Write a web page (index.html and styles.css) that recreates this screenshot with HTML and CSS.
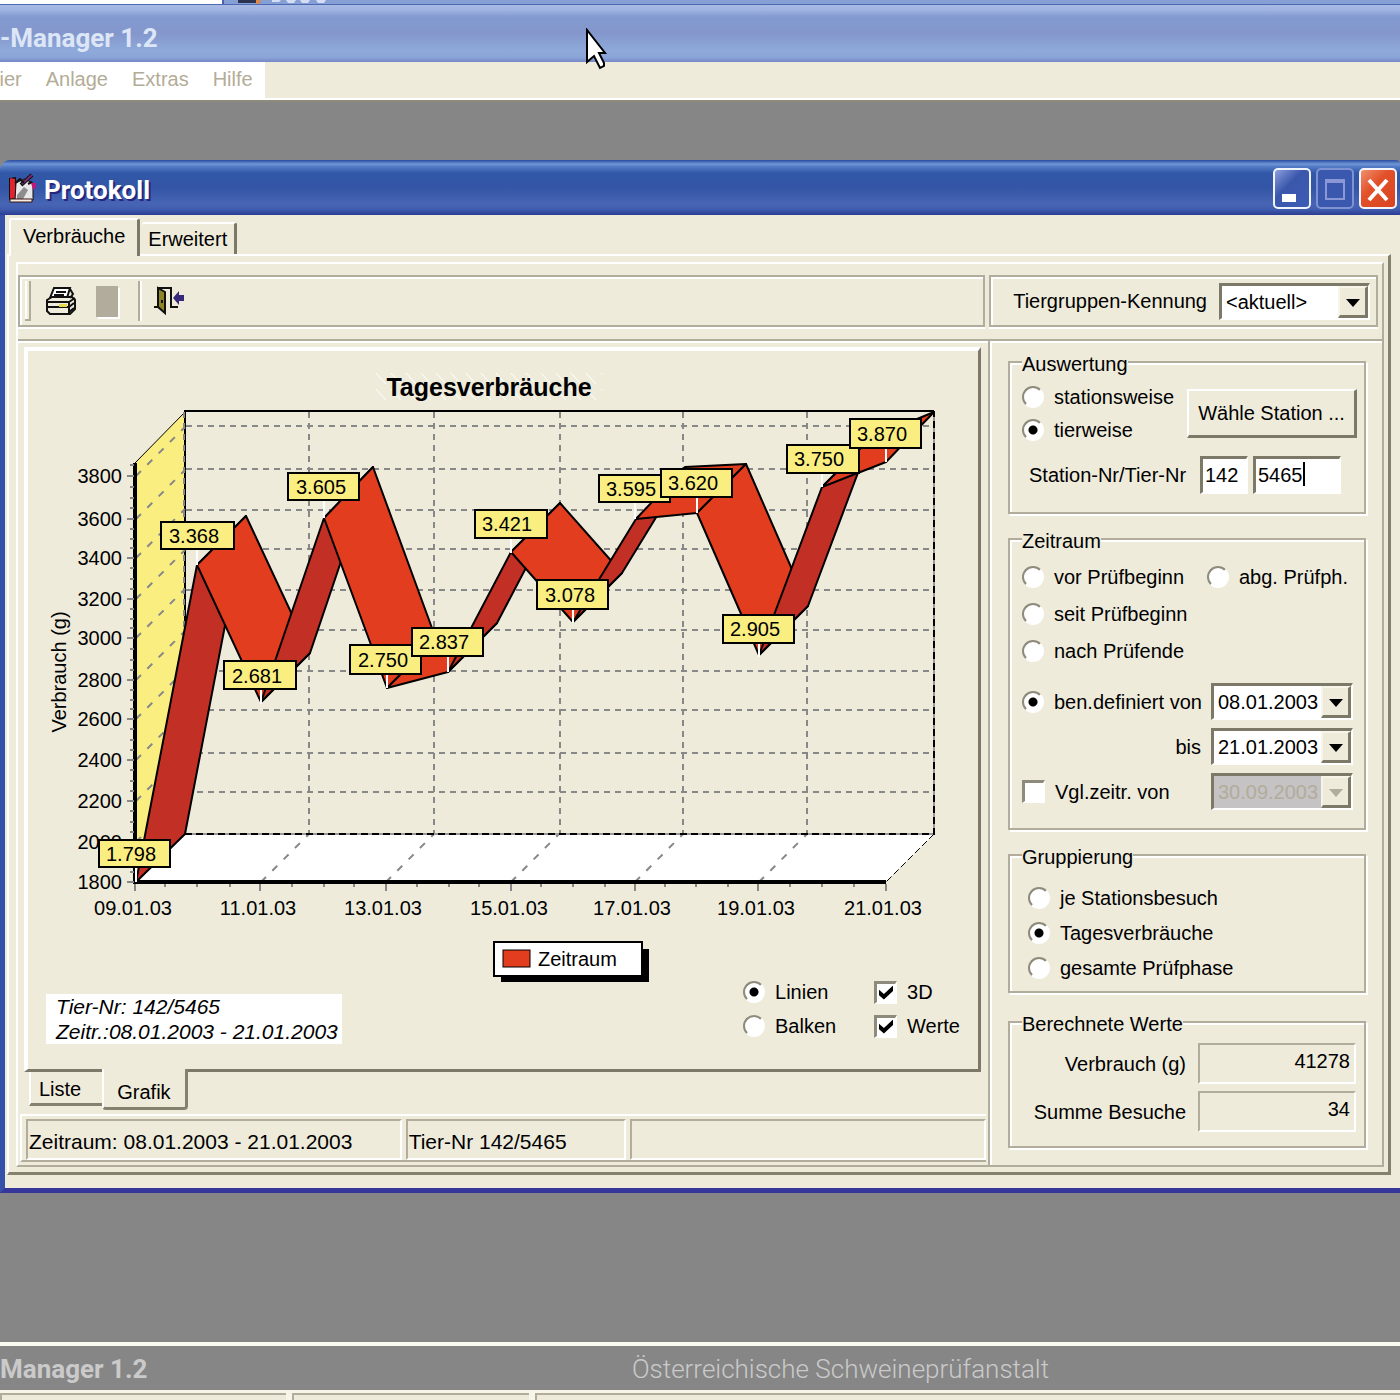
FILE: index.html
```
<!DOCTYPE html>
<html lang="de">
<head>
<meta charset="utf-8">
<title>Protokoll</title>
<meta name="viewport" content="width=device-width">
<link rel="stylesheet" href="styles.css">
</head>
<body>

<header class="app">
	<div class="behind">
		<div class="behind-page"></div>
		<svg class="behind-title" width="120" height="4" viewBox="0 0 120 4">
			<path d="M14 0h22v3h-22z" fill="#2b3350"/><path d="M32 0h5l-2 4h-3z" fill="#e08a4a"/>
			<path d="M48 0h9l-2 2h-7zM62 0h10l-2 3h-6zM76 0h10l-2 3h-6zM92 0h10l-2 3h-6z" fill="#d5def4"/>
		</svg>
	</div>
	<div class="app-title">-Manager 1.2</div>
	<nav class="menubar">
		<ul>
			<li><a href="#">Tier</a></li>
			<li><a href="#">Anlage</a></li>
			<li><a href="#">Extras</a></li>
			<li><a href="#">Hilfe</a></li>
		</ul>
	</nav>
</header>

<main class="desktop">
<section class="window">
	<div class="titlebar">
		<svg class="title-icon" width="32" height="32" viewBox="0 0 32 32">
			<path d="M2 5l7-1v23H2z" fill="#111"/>
			<path d="M3 5l5 1v19l-5 1z" fill="#e0232e"/>
			<path d="M9 10l8-4 9 4v17H8z" fill="#e8e8e8" stroke="#111" stroke-width="1"/>
			<path d="M10 22l7-8 4 3-5 9h-6z" fill="#8d8d90"/>
			<path d="M14 12l11-10" stroke="#111" stroke-width="4" fill="none"/>
			<path d="M15 11l10-9" stroke="#7b2a7c" stroke-width="2"/>
			<path d="M8 10l5-4 4 4M21 11l4-2" stroke="#111" stroke-width="2" fill="none"/>
			<path d="M24 10h5v4l-3 3z" fill="#c2177d"/>
			<path d="M3 26h22v3H3z" fill="#f6efe0" stroke="#3a1414"/>
		</svg>
		<h1>Protokoll</h1>
		<div class="window-buttons">
			<button type="button" aria-label="Minimieren"><svg viewBox="0 0 34 36"><rect x="7" y="23" width="14" height="8" fill="#fff"/></svg></button>
			<button type="button" class="dim" aria-label="Maximieren" disabled><svg viewBox="0 0 34 36"><path d="M8 9h18v19H8zM8 11h18" fill="none" stroke="#8c98d6" stroke-width="2"/></svg></button>
			<button type="button" class="close" aria-label="Schließen"><svg viewBox="0 0 34 36"><path d="M8 9l18 20M26 9L8 29" stroke="#fff" stroke-width="4"/></svg></button>
		</div>
	</div>

	<div class="client">
	<div class="tabs" role="tablist">
		<button type="button" role="tab" class="tab active" aria-selected="true">Verbräuche</button>
		<button type="button" role="tab" class="tab">Erweitert</button>
	</div>

	<div class="sheet">
	<div class="inner">
		<div class="toolbars">
			<div class="toolbar">
				<span class="grip"></span>
				<button type="button" class="tool" aria-label="Drucken">
					<svg width="32" height="30" viewBox="0 0 32 30">
						<path d="M9 2h16l-3 10H5z" fill="#fff" stroke="#111" stroke-width="2"/>
						<path d="M11 6h10M9 9h10" stroke="#111" stroke-width="2"/>
						<path d="M2 14l5-3h20l3 3v9l-5 5H5l-3-3z" fill="#efecdd" stroke="#111" stroke-width="2"/>
						<path d="M2 16h22v11M3 21h21M24 16l6-4M24 21l5-4M24 26l5-4M25 3l3 5-3 4" stroke="#111" stroke-width="2" fill="none"/>
						<path d="M14 18h8v3h-8z" fill="#e5d84a"/>
					</svg>
				</button>
				<button type="button" class="tool tool-blank" aria-label="Vorschau" disabled></button>
				<span class="divider"></span>
				<button type="button" class="tool" aria-label="Beenden">
					<svg width="32" height="30" viewBox="0 0 32 30">
						<path d="M0 21h5M4 2h13v19h7" fill="none" stroke="#111" stroke-width="2"/>
						<path d="M4 2l7 4v21l-7-6z" fill="#8e8424" stroke="#111" stroke-width="2"/>
						<path d="M8 14v3" stroke="#111" stroke-width="2"/>
						<path d="M19 12l6-7v4h5v6h-5v4z" fill="#36297a"/>
					</svg>
				</button>
			</div>
			<div class="toolbar group-bar">
				<label for="kennung">Tiergruppen-Kennung</label>
				<span class="select wide"><select id="kennung"><option>&lt;aktuell&gt;</option></select></span>
			</div>
		</div>

		<div class="columns">
		<div class="left">
			<div class="chart-panel">
				<svg class="chart" viewBox="28 351 950 624" role="img" aria-label="Tagesverbräuche">
					<defs>
						<pattern id="hatch" x="374" y="371" width="15" height="16" patternUnits="userSpaceOnUse">
							<path d="M2 2l10 11" stroke="#fff" stroke-width="1"/>
						</pattern>
					</defs>
					<rect x="374" y="371" width="228" height="32" fill="url(#hatch)"/>
					<text class="chart-title" x="489" y="396">Tagesverbräuche</text>

					<!-- walls and floor -->
					<path d="M135 463l50-51v422l-50 48z" fill="#faee80"/>
					<path d="M135 882l50-48h749l-48 48z" fill="#fff"/>
					<path class="edge" d="M135 463l50-51"/>
					<path class="edge thick" d="M185 834V411h749"/>

					<!-- grid -->
					<path class="grid" d="M186 426h748M186 469h748M186 510h748M186 549h748M186 590h748M186 630h748M186 671h748M186 710h748M186 753h748M186 792h748"/>
					<path class="grid" d="M309 412v422M434 412v422M560 412v422M683 412v422M807 412v422M184 412v422"/>
					<path class="grid slant" d="M136 476l49-49M136 519l49-49M136 558l49-49M136 599l49-49M136 638l49-49M136 680l49-49M136 719l49-49M136 760l49-49M136 801l49-49M136 842l49-49"/>
					<path class="grid slant" d="M261 882l48-48M386 882l48-48M511 882l48-48M635 882l48-48M759 882l48-48"/>
					<path class="back" d="M185 834h749V411"/>
					<path class="edge dash" d="M934 834l-48 48"/>
					<path class="back-dash" d="M185 834h749V411"/>

					<!-- axes -->
					<path d="M135 463v421" stroke="#000" stroke-width="4"/>
					<path d="M134 882h752" stroke="#000" stroke-width="4"/>
					<path class="tick" d="M127 476h7M127 519h7M127 558h7M127 599h7M127 638h7M127 680h7M127 719h7M127 760h7M127 801h7M127 842h7M127 882h7"/>
					<path class="tick" d="M130 465h4M130 487h4M130 498h4M130 508h4M130 529h4M130 539h4M130 548h4M130 568h4M130 579h4M130 589h4M130 609h4M130 619h4M130 628h4M130 649h4M130 660h4M130 670h4M130 690h4M130 700h4M130 709h4M130 729h4M130 740h4M130 750h4M130 770h4M130 781h4M130 791h4M130 811h4M130 822h4M130 832h4M130 872h4"/>
					<path class="tick" d="M135 884v7M260 884v7M386 884v7M511 884v7M635 884v7M758 884v7M886 884v7"/>
					<path class="tick" d="M165 884v3M197 884v3M230 884v3M292 884v3M324 884v3M354 884v3M417 884v3M449 884v3M479 884v3M541 884v3M573 884v3M605 884v3M665 884v3M696 884v3M728 884v3M790 884v3M822 884v3M854 884v3"/>
					<g class="axis-y">
						<text x="122" y="483">3800</text>
						<text x="122" y="526">3600</text>
						<text x="122" y="565">3400</text>
						<text x="122" y="606">3200</text>
						<text x="122" y="645">3000</text>
						<text x="122" y="687">2800</text>
						<text x="122" y="726">2600</text>
						<text x="122" y="767">2400</text>
						<text x="122" y="808">2200</text>
						<text x="122" y="849">2000</text>
						<text x="122" y="889">1800</text>
					</g>
					<g class="axis-x">
						<text x="133" y="915">09.01.03</text>
						<text x="258" y="915">11.01.03</text>
						<text x="383" y="915">13.01.03</text>
						<text x="509" y="915">15.01.03</text>
						<text x="632" y="915">17.01.03</text>
						<text x="756" y="915">19.01.03</text>
						<text x="883" y="915">21.01.03</text>
					</g>
					<text class="axis-name" transform="translate(66 672) rotate(-90)">Verbrauch (g)</text>

					<!-- ribbon, one piece per day -->
					<g class="ribbon">
						<path class="up" d="M136 882l61-317 49-49-61 318z"/>
						<path d="M197 565l64 137 49-49-64-137z"/>
						<path class="up" d="M261 702l63-184 49-51-63 186z"/>
						<path d="M324 518l63 170 49-49-63-172z"/>
						<path d="M387 688l61-16 49-49-61 16z"/>
						<path class="up" d="M448 672l63-120 49-49-63 120z"/>
						<path d="M511 552l62 70 49-49-62-70z"/>
						<path class="up" d="M573 622l63-103 49-49-63 103z"/>
						<path d="M636 519l61-6 49-49-61 3z"/>
						<path d="M697 513l62 142 49-49-62-142z"/>
						<path class="up" d="M759 655l63-168 49-49-63 168z"/>
						<path d="M822 487l64-25 48-50-63 26z"/>
					</g>
					<path d="M136 867v15M197 549v16M261 690v14M324 501v17M387 675v13M448 656v16M511 538v15M573 609v14M635 503v16M697 497v16M759 643v14M822 472v15M886 448v14" stroke="#fff" stroke-width="2"/>

					<g class="marks">
						<rect x="99" y="840" width="71" height="27"/><text x="106" y="861">1.798</text>
						<rect x="161" y="522" width="73" height="27"/><text x="169" y="543">3.368</text>
						<rect x="224" y="661" width="72" height="28"/><text x="232" y="683">2.681</text>
						<rect x="288" y="473" width="71" height="27"/><text x="296" y="494">3.605</text>
						<rect x="350" y="645" width="71" height="29"/><text x="358" y="667">2.750</text>
						<rect x="412" y="628" width="71" height="28"/><text x="419" y="649">2.837</text>
						<rect x="475" y="510" width="72" height="28"/><text x="482" y="531">3.421</text>
						<rect x="537" y="580" width="71" height="29"/><text x="545" y="602">3.078</text>
						<rect x="599" y="475" width="71" height="27"/><text x="606" y="496">3.595</text>
						<rect x="661" y="469" width="71" height="28"/><text x="668" y="490">3.620</text>
						<rect x="723" y="615" width="71" height="28"/><text x="730" y="636">2.905</text>
						<rect x="787" y="445" width="72" height="28"/><text x="794" y="466">3.750</text>
						<rect x="850" y="419" width="71" height="29"/><text x="857" y="441">3.870</text>
					</g>

					<!-- legend -->
					<rect x="501" y="949" width="148" height="33"/>
					<rect x="494" y="942" width="148" height="34" fill="#fff" stroke="#000" stroke-width="2"/>
					<rect x="503" y="950" width="27" height="17" fill="#e23d1f" stroke="#000" stroke-width="1"/>
					<text x="538" y="966">Zeitraum</text>
				</svg>

				<div class="chart-foot">
					<p class="note">Tier-Nr: 142/5465<br>Zeitr.:08.01.2003 - 21.01.2003</p>
					<div class="options">
						<label><input type="radio" name="art" checked>Linien</label>
						<label><input type="checkbox" checked>3D</label>
						<label><input type="radio" name="art">Balken</label>
						<label><input type="checkbox" checked>Werte</label>
					</div>
				</div>
			</div>

			<div class="bottom-tabs" role="tablist">
				<button type="button" role="tab" class="btab">Liste</button>
				<button type="button" role="tab" class="btab active" aria-selected="true">Grafik</button>
			</div>

			<div class="status">
				<span>Zeitraum: 08.01.2003 - 21.01.2003</span>
				<span>Tier-Nr 142/5465</span>
				<span></span>
			</div>
		</div>

		<form class="right">
			<fieldset class="auswertung">
				<legend>Auswertung</legend>
				<div class="pick">
					<div class="radios">
						<label><input type="radio" name="ausw">stationsweise</label>
						<label><input type="radio" name="ausw" checked>tierweise</label>
					</div>
					<button type="button" class="push">Wähle Station ...</button>
				</div>
				<div class="numbers">
					<label for="station">Station-Nr/Tier-Nr</label>
					<input id="station" class="short" type="text" value="142">
					<span class="caret-box"><input type="text" aria-label="Tier-Nr" value="5465"></span>
				</div>
			</fieldset>

			<fieldset class="zeitraum">
				<legend>Zeitraum</legend>
				<div class="phases">
					<label><input type="radio" name="zeit">vor Prüfbeginn</label>
					<label><input type="radio" name="zeit">abg. Prüfph.</label>
					<label><input type="radio" name="zeit">seit Prüfbeginn</label>
					<label><input type="radio" name="zeit">nach Prüfende</label>
				</div>
				<div class="dates">
					<label><input type="radio" name="zeit" checked>ben.definiert von</label>
					<span class="select"><select aria-label="von"><option>08.01.2003</option></select></span>
					<label class="bis" for="bis">bis</label>
					<span class="select"><select id="bis"><option>21.01.2003</option></select></span>
					<label><input type="checkbox">Vgl.zeitr. von</label>
					<span class="select off"><select aria-label="Vergleichszeitraum" disabled><option>30.09.2003</option></select></span>
				</div>
			</fieldset>

			<fieldset class="gruppierung">
				<legend>Gruppierung</legend>
				<label><input type="radio" name="grp">je Stationsbesuch</label>
				<label><input type="radio" name="grp" checked>Tagesverbräuche</label>
				<label><input type="radio" name="grp">gesamte Prüfphase</label>
			</fieldset>

			<fieldset class="werte">
				<legend>Berechnete Werte</legend>
				<label for="verbrauch">Verbrauch (g)</label><output id="verbrauch">41278</output>
				<label for="besuche">Summe Besuche</label><output id="besuche">34</output>
			</fieldset>
		</form>
		</div>
	</div>
	</div>
	</div>
</section>
</main>

<footer class="app-foot">
	<div class="brand"><strong>Manager 1.2</strong><span>Österreichische Schweineprüfanstalt</span></div>
	<div class="app-status"><i></i><i></i><i></i></div>
</footer>

<svg class="pointer" width="26" height="44" viewBox="0 0 26 44">
	<path d="M2 2v32l7-6 6 12 4-2v-3l-5-10h6z" fill="#fff" stroke="#000" stroke-width="2"/>
</svg>

</body>
</html>
```
FILE: styles.css
```
*, *::before, *::after {
	box-sizing: border-box;
}

body {
	margin: 0;
	min-height: 100vh;
	display: flex;
	flex-direction: column;
	overflow-x: hidden;
	background: #868686;
	color: #000;
	font-family: "Liberation Sans", Arial, sans-serif;
	font-size: 20px;
	line-height: 24px;
}

button, input, select {
	font: inherit;
	color: inherit;
	margin: 0;
}

/* main window */
.behind {
	display: flex;
	height: 4px;
	background: #86a0d6;
}
.behind-page {
	width: 16%;
	background: #fff;
	border-right: 2px solid #4a63b0;
}
.app-title {
	height: 58px;
	padding-top: 17px;
	border-top: 1px solid #4d6bb5;
	background: linear-gradient(#a9bbe5 0, #a0b4e1 5px, #829ad0 12px, #8497cc 50%, #8ea9da 80%, #8ba5d8 92%, #7686c6 100%);
	color: #dde6f7;
	font-family: Roboto, sans-serif;
	font-size: 26px;
	font-weight: bold;
	line-height: 32px;
}
.menubar {
	background: #eeebdb;
	border-bottom: 2px solid #8f8b7c;
	box-shadow: inset 0 -2px #fff;
}
.menubar ul {
	display: inline-flex;
	gap: 24px;
	margin: 0 0 0 -12px;
	padding: 5px 12px 8px 0;
	height: 38px;
	background: #fff;
	list-style: none;
	vertical-align: top;
}
.menubar a {
	color: #b3ac97;
	text-decoration: none;
}
.pointer {
	position: absolute;
	left: 585px;
	top: 28px;
}

/* child window */
.desktop {
	flex: 1;
	padding: 58px 0 40px;
}
.titlebar {
	display: flex;
	align-items: center;
	height: 55px;
	padding: 2px 3px 0 7px;
	border-radius: 10px 4px 0 0;
	background: linear-gradient(#2a4ba0 0, #6f96d6 4px, #5079c4 7px, #3158a8 13px, #3455a5 50%, #4765b4 80%, #3f5cae 90%, #2b3c93 100%);
}
.title-icon {
	margin-right: 5px;
}
h1 {
	flex: 1;
	margin: 0;
	padding-top: 3px;
	color: #fff;
	font-family: Roboto, sans-serif;
	font-size: 26px;
	line-height: 32px;
	text-shadow: 2px 2px #25277c;
}
.window-buttons {
	display: flex;
	gap: 5px;
}
.window-buttons button {
	width: 38px;
	height: 41px;
	padding: 0;
	border: 2px solid #f2f4fb;
	border-radius: 5px;
	background: linear-gradient(135deg, #8c9ede, #3a57ab 40%, #3c5cb4);
}
.window-buttons svg {
	display: block;
}
.window-buttons .dim {
	border-color: #7f92d2;
	background: #3a59ae;
}
.window-buttons .close {
	background: linear-gradient(135deg, #f0906e, #e2512a 40%, #d8431f);
}
.client {
	padding: 3px 9px 13px 2px;
	border: solid #3450a8;
	border-width: 0 0 5px 5px;
	border-bottom-color: #35359a;
	background: #eeebdb;
}

/* tabs */
.tabs {
	display: flex;
	align-items: flex-end;
	gap: 2px;
	padding-left: 2px;
}
.tab {
	height: 32px;
	padding: 0 7px 0 6px;
	border: 2px solid #fff;
	border-right: 3px solid #7d7969;
	border-bottom: 0;
	border-radius: 3px 3px 0 0;
	border-left: 0;
	background: #eeebdb;
}
.tab.active {
	height: 38px;
	margin-bottom: -2px;
	padding: 0 12px 4px 12px;
	border-left: 2px solid #fff;
	position: relative;
}
.sheet {
	padding: 6px 4px 5px 7px;
	border: 2px solid #fff;
	border-right: 3px solid #85816f;
	border-bottom: 3px solid #85816f;
}
.inner {
	border: 2px solid #fff;
	border-right-color: #b2ac9c;
	border-bottom-color: #b2ac9c;
}

/* toolbars */
.toolbars {
	display: grid;
	grid-template-columns: 1fr 389px;
	gap: 4px;
	padding: 11px 4px 12px 0;
}
.toolbar {
	display: flex;
	align-items: center;
	height: 52px;
	border: 2px solid #b2ac9c;
	box-shadow: inset 2px 2px #fff, 0 2px #fff;
}
.grip {
	width: 6px;
	height: 40px;
	margin: 0 14px 0 5px;
	border: solid #b2ac9c;
	border-width: 0 2px 2px 0;
	box-shadow: inset 2px 0 #fff;
}
.tool {
	padding: 0;
	border: 0;
	background: none;
	line-height: 0;
}
.tool-blank {
	width: 22px;
	height: 31px;
	margin-left: 19px;
	background: #b2ac9c;
	box-shadow: 2px 2px #fff;
}
.divider {
	width: 4px;
	height: 40px;
	margin: 0 12px 0 20px;
	border-left: 2px solid #b2ac9c;
	border-right: 2px solid #fff;
}
.group-bar {
	justify-content: flex-end;
	gap: 12px;
	padding-right: 6px;
}

/* drop-downs with their raised button */
.select {
	position: relative;
	display: block;
	width: 142px;
	height: 37px;
	border: solid;
	border-width: 3px 2px 2px 3px;
	border-color: #7d7969 #fff #fff #7d7969;
	background: #fff;
}
.select.wide {
	width: 151px;
}
.select select {
	appearance: none;
	width: 100%;
	height: 100%;
	padding: 0 0 0 4px;
	border: 0;
	background: none;
	opacity: 1;
}
.select::before {
	content: "";
	position: absolute;
	right: 0;
	top: 0;
	bottom: 0;
	width: 30px;
	border: 2px solid #f7f5ea;
	border-right: 3px solid #7d7969;
	border-bottom: 3px solid #7d7969;
	background: #eeebdb;
	pointer-events: none;
}
.select::after {
	content: "";
	position: absolute;
	right: 8px;
	top: 13px;
	border: 7px solid transparent;
	border-top: 8px solid #000;
	border-bottom: 0;
	pointer-events: none;
}
.select.off {
	background: #c5c3c4;
	color: #b2ac9c;
}
.select.off::after {
	border-top-color: #b2ac9c;
}

/* radios and tick boxes */
input[type="radio"], input[type="checkbox"] {
	appearance: none;
	flex: none;
	width: 22px;
	height: 22px;
	border: 2px solid #fff;
	border-top-color: #8f8b7c;
	border-left-color: #8f8b7c;
	background: #fff;
}
input[type="radio"] {
	border-radius: 50%;
}
input[type="radio"]:checked {
	background: radial-gradient(circle, #000 4px, #fff 5px);
}
input[type="checkbox"] {
	width: 23px;
	height: 23px;
	border-width: 3px 2px 2px 3px;
}
input[type="checkbox"]:checked::before {
	content: "";
	display: block;
	width: 14px;
	height: 14px;
	margin: 2px;
	background: #000;
	clip-path: polygon(0 30%, 35% 60%, 100% 0, 100% 40%, 35% 100%, 0 70%);
}
label {
	display: flex;
	align-items: center;
	gap: 10px;
	white-space: nowrap;
}

/* content columns */
.columns {
	display: grid;
	grid-template-columns: 1fr 394px;
	border-top: 2px solid #b2ac9c;
	box-shadow: inset 0 2px #fff;
}
.left {
	padding: 6px 2px 3px 2px;
}
.chart-panel {
	margin: 0 5px 0 4px;
	border: 4px solid #fff;
	border-right: 3px solid #7d7969;
	border-bottom: 3px solid #7d7969;
}
.chart {
	display: block;
	width: 100%;
	overflow: visible;
}
.chart-title {
	font-size: 25px;
	font-weight: bold;
	text-anchor: middle;
}
.axis-y text {
	text-anchor: end;
}
.axis-x text, .axis-name {
	text-anchor: middle;
}
.edge {
	fill: none;
	stroke: #000;
	stroke-width: 1;
}
.edge.thick {
	stroke-width: 2;
}
.edge.dash {
	stroke-dasharray: 7 3;
}
.grid {
	fill: none;
	stroke: #888;
	stroke-width: 2;
	stroke-dasharray: 6 5;
}
.grid.slant {
	stroke-dasharray: 7 9;
}
.back {
	fill: none;
	stroke: #999;
	stroke-width: 2;
}
.back-dash {
	fill: none;
	stroke: #000;
	stroke-width: 2;
	stroke-dasharray: 7 4;
}
.tick {
	stroke: #888;
	stroke-width: 2;
}
.ribbon path {
	fill: #e23d1f;
	stroke: #000;
	stroke-width: 2;
	stroke-linejoin: round;
}
.ribbon .up {
	fill: #c22f25;
}
.marks rect {
	fill: #faee80;
	stroke: #000;
	stroke-width: 2;
}
.chart-foot {
	display: flex;
	justify-content: space-between;
	padding: 0 18px 25px;
}
.note {
	margin: 19px 0 0;
	padding: 0 4px 0 10px;
	background: #fff;
	font-size: 21px;
	font-style: italic;
	line-height: 25px;
}
.options {
	display: grid;
	grid-template-columns: 131px auto;
	grid-auto-rows: 34px;
}

.bottom-tabs {
	display: flex;
	align-items: flex-start;
	height: 42px;
	padding-left: 9px;
}
.btab {
	height: 34px;
	padding: 2px 21px 0 8px;
	border: 2px solid #fff;
	border-width: 0 0 0 2px;
	border-bottom: 3px solid #85816f;
	background: #eeebdb;
}
.btab.active {
	position: relative;
	height: 41px;
	margin-top: -3px;
	padding: 9px 14px 2px 13px;
	border-right: 3px solid #85816f;
	border-radius: 0 0 4px 4px;
}
.status {
	display: grid;
	grid-template-columns: 378fr 222fr 358fr;
	gap: 4px;
	padding: 3px 0 0 4px;
	border-top: 2px solid #fff;
	border-left: 2px solid #fff;
	border-bottom: 2px solid #b2ac9c;
	font-size: 21px;
}
.status span {
	height: 41px;
	padding: 9px 0 0 1px;
	border: 2px solid #b2ac9c;
	border-right-color: #fff;
	border-bottom-color: #fff;
	white-space: nowrap;
}

/* settings */
.right {
	display: flex;
	flex-direction: column;
	gap: 11px;
	padding: 7px 16px 10px 18px;
	border-left: 2px solid #b2ac9c;
	box-shadow: inset 2px 2px #fff;
}
fieldset {
	min-width: 0;
	margin: 0;
	padding: 0 8px 0 12px;
	border: 2px solid #b2ac9c;
	box-shadow: 2px 2px #fff, inset 2px 2px #fff;
}
legend {
	margin: 0;
	padding: 4px 0 0;
	line-height: 24px;
	background: #eeebdb;
}
.pick {
	display: flex;
	justify-content: space-between;
	align-items: center;
	margin-right: -1px;
	padding-top: 4px;
}
.radios label {
	height: 33px;
}
.push {
	width: 170px;
	height: 49px;
	padding: 0;
	border: 2px solid #fff;
	border-right: 3px solid #7d7969;
	border-bottom: 3px solid #7d7969;
	background: #eeebdb;
	white-space: nowrap;
}
.numbers {
	display: flex;
	gap: 5px;
	padding: 10px 15px 18px 7px;
}
.numbers label {
	flex: 1;
}
input[type="text"] {
	width: 88px;
	height: 38px;
	padding: 0 0 0 2px;
	border: solid;
	border-width: 3px 2px 2px 3px;
	border-color: #7d7969 #fff #fff #7d7969;
	background: #fff;
}
input.short {
	width: 48px;
}
.caret-box {
	position: relative;
}
.caret-box::after {
	content: "";
	position: absolute;
	left: 50px;
	top: 6px;
	width: 2px;
	height: 24px;
	background: #000;
}
.phases {
	display: grid;
	grid-template-columns: 185px auto;
	grid-auto-rows: 37px;
	padding-top: 5px;
}
.phases label:nth-child(3), .phases label:nth-child(4) {
	grid-column: 1;
}
.dates {
	display: grid;
	grid-template-columns: 1fr auto;
	row-gap: 8px;
	margin-right: 3px;
	padding: 14px 0 18px;
}
.dates .bis {
	justify-content: flex-end;
	padding-right: 10px;
}
.gruppierung {
	padding: 11px 8px 6px 12px;
}
.gruppierung label {
	height: 35px;
	padding-left: 6px;
}
.werte {
	display: grid;
	grid-template-columns: 1fr 158px;
	gap: 7px 12px;
	margin-top: 4px;
	padding-top: 7px;
	padding-bottom: 14px;
}
.werte label {
	justify-content: flex-end;
}
.werte output {
	height: 41px;
	padding: 4px 4px 0 0;
	border: 2px solid #b2ac9c;
	border-right-color: #fff;
	border-bottom-color: #fff;
	text-align: right;
}

/* bottom of the main window */
.brand {
	display: flex;
	height: 48px;
	padding-top: 5px;
	border-top: 4px solid #fbfaf0;
	color: #cacaca;
	font-family: Roboto, sans-serif;
	font-size: 26px;
	line-height: 36px;
}
.brand strong {
	width: 632px;
}
.brand span {
	font-weight: 300;
}
.app-status {
	display: grid;
	grid-template-columns: 286fr 237fr 865fr;
	gap: 6px;
	padding-top: 3px;
	background: #f7f5e8;
}
.app-status i {
	height: 7px;
	border-top: 2px solid #b2ac9c;
	border-left: 2px solid #b2ac9c;
	background: #eeebdb;
}
```
